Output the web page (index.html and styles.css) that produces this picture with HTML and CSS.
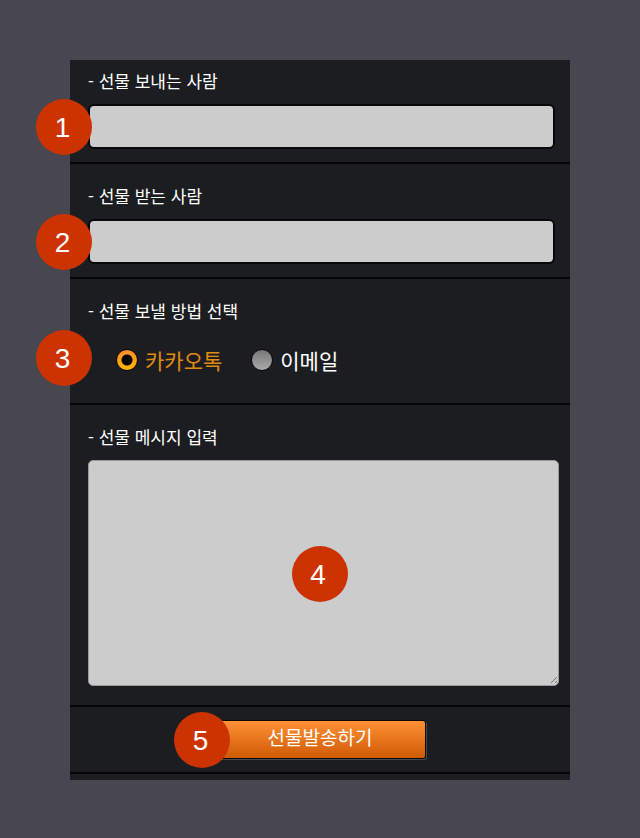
FILE: index.html
```html
<!DOCTYPE html>
<html lang="ko">
<head>
<meta charset="utf-8">
<meta name="viewport" content="width=device-width, initial-scale=1">
<title>선물 보내기</title>
<link rel="stylesheet" href="styles.css">
</head>
<body>
<form class="panel">
  <section class="section section-first">
    <label class="label" for="sender">- 선물 보내는 사람</label>
    <div class="field">
      <input class="text-input" id="sender" type="text">
      <span class="badge badge-side">1</span>
    </div>
  </section>
  <section class="section">
    <label class="label" for="receiver">- 선물 받는 사람</label>
    <div class="field">
      <input class="text-input" id="receiver" type="text">
      <span class="badge badge-side">2</span>
    </div>
  </section>
  <section class="section section-method" role="radiogroup" aria-labelledby="method">
    <div class="label" id="method">- 선물 보낼 방법 선택</div>
    <div class="field options">
      <label class="option"><input class="radio" type="radio" name="method" checked><span>카카오톡</span></label>
      <label class="option"><input class="radio" type="radio" name="method"><span>이메일</span></label>
      <span class="badge badge-side">3</span>
    </div>
  </section>
  <section class="section section-message">
    <label class="label" for="message">- 선물 메시지 입력</label>
    <div class="field">
      <textarea class="message" id="message"></textarea>
      <svg class="grip" viewBox="0 0 8 8" aria-hidden="true"><path d="M1 7 7 1M5 7 7 5"/></svg>
      <span class="badge badge-center">4</span>
    </div>
  </section>
  <section class="section section-submit">
    <div class="submit-wrap">
      <button class="submit" type="button">선물발송하기</button>
      <span class="badge badge-button">5</span>
    </div>
  </section>
</form>
</body>
</html>
```
FILE: styles.css
```css
* {
  box-sizing: border-box;
}

body {
  margin: 0;
  padding: 60px 70px 58px;
  background: #48464e;
  color: #fff;
  font-family: "Noto Sans CJK KR", sans-serif;
}

.panel {
  padding-bottom: 6px;
  background: #1c1d21;
}

.section {
  padding: 20px 15px 13px 18px;
  border-bottom: 2px solid #050507;
}

.section-first {
  padding-top: 9px;
}

.section-method {
  padding-bottom: 21px;
}

.section-message {
  padding-right: 11px;
  padding-bottom: 19px;
}

.section-submit {
  display: flex;
  justify-content: center;
  padding: 13px 0;
}

.label {
  display: block;
  margin-bottom: 11px;
  font-size: 17px;
  line-height: 24px;
}

.field {
  position: relative;
}

.text-input {
  display: block;
  width: 100%;
  height: 45px;
  padding: 0 10px;
  border: 2px solid #08080a;
  border-radius: 6px;
  background: #ccc;
  font: inherit;
  font-size: 18px;
}

.options {
  display: flex;
  align-items: center;
  gap: 29px;
  height: 48px;
  padding-top: 3px;
  padding-left: 28px;
}

.option {
  display: flex;
  align-items: center;
  gap: 7px;
  font-size: 21px;
  line-height: 32px;
}

.option:has(:checked) {
  color: #e08c10;
}

.radio {
  appearance: none;
  width: 22px;
  height: 22px;
  margin: 0;
  border: 1px solid #08080a;
  border-radius: 50%;
  background: linear-gradient(#777, #aaa);
}

.radio:checked {
  background:
    radial-gradient(circle, #050507 5px, transparent 6px),
    linear-gradient(#ff8c32, #ffb400);
}

.message {
  display: block;
  width: 100%;
  height: 226px;
  padding: 10px;
  border: 1px solid #999;
  border-radius: 5px;
  background: #ccc;
  font: inherit;
  font-size: 18px;
  resize: none;
}

.grip {
  position: absolute;
  right: 1px;
  bottom: 2px;
  width: 8px;
  height: 8px;
  fill: none;
  stroke: #777;
}

.submit-wrap {
  position: relative;
}

.submit {
  display: block;
  width: 212px;
  height: 39px;
  padding: 0 0 6px;
  border: 1px solid #08080a;
  border-radius: 3px;
  background: linear-gradient(#ff9035, #cf5a04);
  box-shadow: 1px 1px 0 #4a4b50;
  color: #fff;
  font: inherit;
  font-size: 19px;
}

.badge {
  position: absolute;
  width: 56px;
  height: 56px;
  padding-right: 3px;
  border-radius: 50%;
  background: #cc3300;
  color: #fff;
  font-family: "Liberation Sans", sans-serif;
  font-size: 28px;
  line-height: 58px;
  text-align: center;
}

.badge-side {
  top: calc(50% - 28px);
  left: -52px;
}

.badge-center {
  top: calc(50% - 27px);
  left: calc(50% - 32px);
}

.badge-button {
  top: calc(50% - 28px);
  left: -40px;
}
```
